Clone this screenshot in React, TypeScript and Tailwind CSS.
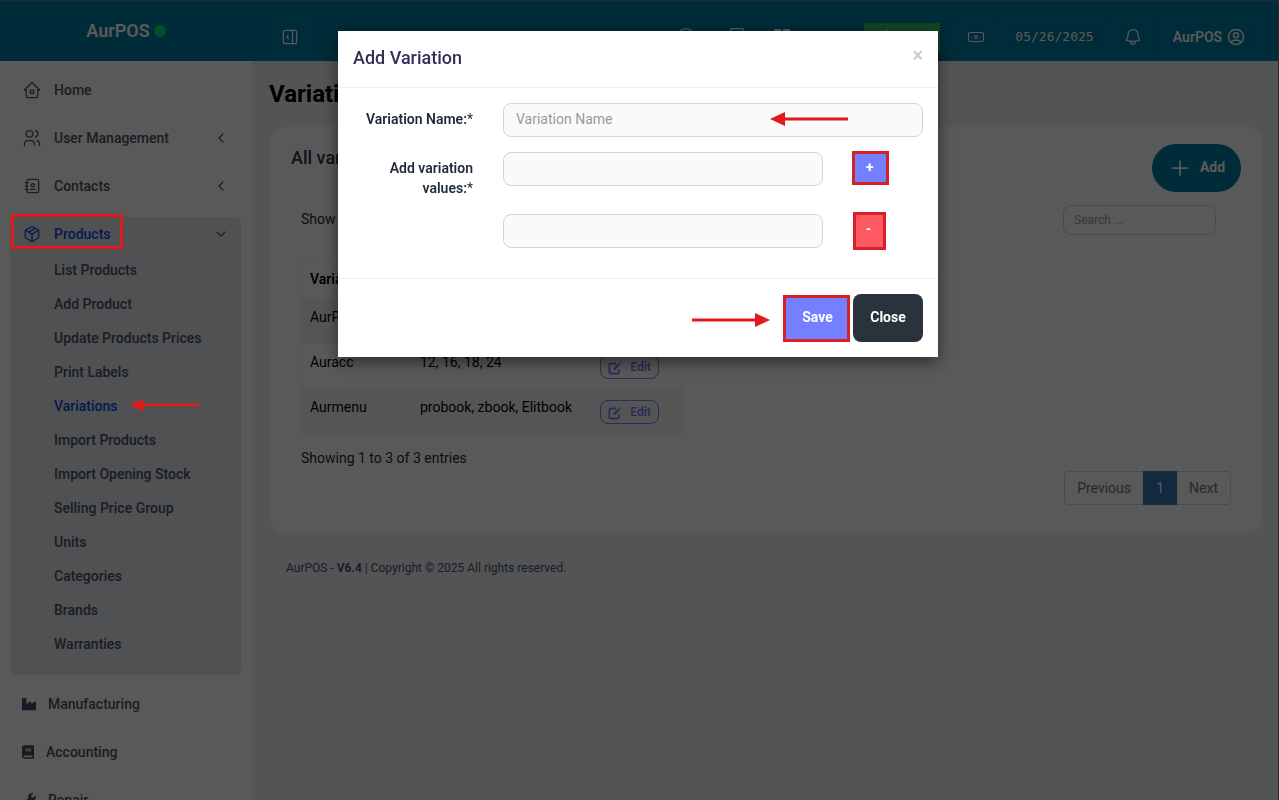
import type { ReactNode } from "react";
import {
  TbAddressBook,
  TbChevronDown,
  TbChevronLeft,
  TbHome2,
  TbLayoutSidebarRightExpand,
  TbPackage,
  TbPlus,
  TbUserCircle,
  TbUsers,
} from "react-icons/tb";
import { FaBook, FaIndustry, FaWrench } from "react-icons/fa";
import { HiOutlineBell } from "react-icons/hi2";
import { Banknote, Calculator, CirclePlus, LayoutGrid } from "lucide-react";

const productLinks = [
  "List Products",
  "Add Product",
  "Update Products Prices",
  "Print Labels",
  "Variations",
  "Import Products",
  "Import Opening Stock",
  "Selling Price Group",
  "Units",
  "Categories",
  "Brands",
  "Warranties",
];

const rows = [
  { name: "AurPOS", values: "Small, Medium, Large" },
  { name: "Auracc", values: "12, 16, 18, 24" },
  { name: "Aurmenu", values: "probook, zbook, Elitbook" },
];

function Arrow({ direction, className }: { direction: "left" | "right"; className: string }) {
  return (
    <svg viewBox="0 0 78 16" aria-hidden="true" className={className}>
      {direction === "left" ? (
        <path d="M0 8L15 1V6.5H78V9.5H15V15Z" fill="#e01b1e" />
      ) : (
        <path d="M78 8L63 1V6.5H0V9.5H63V15Z" fill="#e01b1e" />
      )}
    </svg>
  );
}

function EditIcon() {
  return (
    <svg viewBox="0 0 14 14" fill="none" stroke="currentColor" aria-hidden="true" className="mt-0.5 size-3.5">
      <path d="M8 2.5H3.2A1.8 1.8 0 0 0 1.4 4.3V10.8A1.8 1.8 0 0 0 3.2 12.6H9.2A1.8 1.8 0 0 0 11 10.8V8.5" strokeWidth="1.8" />
      <path d="M5.2 9.2L5.8 6.8L10.3 2.3L12 4L7.5 8.5Z" fill="currentColor" stroke="none" />
      <path d="M11 1.7L11.8 0.9L13.4 2.5L12.6 3.3Z" fill="currentColor" stroke="none" />
    </svg>
  );
}

function MenuItem({ icon, label, expandable }: { icon: ReactNode; label: string; expandable?: boolean }) {
  return (
    <a href="#" className="flex h-12 shrink-0 items-center gap-3 pr-6 pl-[22px]">
      {icon}
      <span className="grow">{label}</span>
      {expandable && <TbChevronLeft className="size-4" strokeWidth={1.75} />}
    </a>
  );
}

function Sidebar() {
  return (
    <aside className="flex w-[254px] shrink-0 flex-col overflow-hidden border-r border-gray-200 bg-white pt-[5px] text-sm font-medium text-gray-600">
      <MenuItem icon={<TbHome2 className="size-5" strokeWidth={1.5} />} label="Home" />
      <MenuItem icon={<TbUsers className="size-5" strokeWidth={1.5} />} label="User Management" expandable />
      <MenuItem icon={<TbAddressBook className="size-5" strokeWidth={1.5} />} label="Contacts" expandable />
      <div className="mt-[7px] mr-3 ml-2.5 shrink-0 rounded-md bg-gray-200 pb-3.5">
        <a href="#" className="relative flex h-9 items-center gap-3 px-3 pb-0.5 text-blue-700">
          <TbPackage className="size-5" strokeWidth={1.5} />
          <span className="grow">Products</span>
          <TbChevronDown className="size-4 text-gray-600" strokeWidth={1.75} />
          <span className="absolute -top-[3px] left-px z-30 h-[35px] w-28 border-3 border-[#e01b1e]" />
        </a>
        {productLinks.map((label) => (
          <a
            key={label}
            href="#"
            className={`relative flex h-[34px] items-center pl-11 ${label === "Variations" ? "text-blue-700" : ""}`}
          >
            {label}
            {label === "Variations" && (
              <Arrow direction="left" className="absolute top-2 left-30 z-30 h-4 w-[70px]" />
            )}
          </a>
        ))}
      </div>
      <div className="mt-[5px] shrink-0">
        <a href="#" className="flex h-12 items-center gap-3 pl-[22px]">
          <FaIndustry className="size-3.5 text-[#434968]" />
          Manufacturing
        </a>
        <a href="#" className="flex h-12 items-center gap-3 pl-[22px]">
          <FaBook className="h-3.5 w-3 text-[#434968]" />
          Accounting
        </a>
        <a href="#" className="flex h-12 items-center gap-3 pl-[22px]">
          <FaWrench className="size-3.5 text-[#434968]" />
          Repair
        </a>
      </div>
    </aside>
  );
}

const headerButton =
  "flex h-[34px] items-center justify-center rounded-lg border border-white/5 text-white";

function Header() {
  return (
    <header className="flex h-[61px] shrink-0 border-t border-slate-500 bg-[#007ba0] text-white">
      <div className="flex w-[254px] shrink-0 items-center justify-center gap-1 pr-0.5 text-lg font-semibold">
        AurPOS
        <span className="size-3 rounded-full bg-green-400" />
      </div>
      <div className="flex grow items-start gap-2.5 px-[19px] pt-[19px]">
        <button type="button" aria-label="Toggle sidebar" className={`${headerButton} w-[34px]`}>
          <TbLayoutSidebarRightExpand className="size-5" strokeWidth={1.5} />
        </button>
        <button type="button" aria-label="New" className={`${headerButton} ml-auto w-12`}>
          <CirclePlus className="size-5" strokeWidth={1.5} />
        </button>
        <button type="button" aria-label="Calculator" className={`${headerButton} w-[34px]`}>
          <Calculator className="size-5" strokeWidth={1.5} />
        </button>
        <button type="button" className={`${headerButton} w-20 gap-1 pr-3 text-sm font-semibold`}>
          <LayoutGrid className="size-5" strokeWidth={1.5} fill="currentColor" />
          POS
        </button>
        <button
          type="button"
          aria-label="Repair"
          className="mr-[9px] ml-2.5 mt-[3px] flex h-[30px] w-[76px] items-center bg-[#2fc45f] pl-3 text-white"
        >
          <FaWrench className="size-4" />
        </button>
        <button type="button" aria-label="Profit" className={`${headerButton} w-[34px]`}>
          <Banknote className="size-[18px]" strokeWidth={1.5} />
        </button>
        <time className={`${headerButton} w-[103px] font-['DejaVu_Sans_Mono',monospace] text-[13px]`}>05/26/2025</time>
        <button type="button" aria-label="Notifications" className={`${headerButton} w-[34px]`}>
          <HiOutlineBell className="size-5" />
        </button>
        <button type="button" className={`${headerButton} w-[99px] gap-1 text-sm font-semibold`}>
          AurPOS
          <TbUserCircle className="size-5" strokeWidth={1.75} />
        </button>
      </div>
    </header>
  );
}

function VariationTable() {
  return (
    <table className="w-[382px] table-fixed border-collapse text-left text-black">
      <thead>
        <tr className="h-[38px]">
          <th className="w-[110px] border border-gray-100 px-2 pb-0.5 font-semibold">Variations</th>
          <th className="w-[178px] border border-gray-100 px-2 pb-0.5 font-semibold">Values</th>
          <th className="border border-gray-100 px-2 pb-0.5 font-semibold">Action</th>
        </tr>
      </thead>
      <tbody>
        {rows.map((row) => (
          <tr key={row.name} className="h-[45px] odd:bg-[#f4f4f4]">
            <td className="border border-gray-100 px-2 pt-2 align-top">{row.name}</td>
            <td className="border border-gray-100 px-2 pt-2 align-top whitespace-nowrap">{row.values}</td>
            <td className="border border-gray-100 px-2.5 pt-0.5">
              <button
                type="button"
                className="flex h-6 w-[59px] items-center justify-center gap-2 rounded-lg border border-[#7480ff] text-xs font-semibold text-[#7480ff]"
              >
                <EditIcon />
                Edit
              </button>
            </td>
          </tr>
        ))}
      </tbody>
    </table>
  );
}

function Content() {
  return (
    <main className="flex grow flex-col bg-[#eef0f5] px-[15px] text-sm">
      <h1 className="pt-[17px] text-2xl font-bold text-black">Variations</h1>
      <section className="mt-4 flex flex-col rounded-2xl border border-gray-100 bg-white px-[21px] pt-[17px] pb-7">
        <div className="flex items-start justify-between">
          <h2 className="text-lg font-medium text-[#32305a]">All variations</h2>
          <button
            type="button"
            className="flex h-12 w-[89px] items-center justify-center gap-2 rounded-full bg-[#007ba0] pb-0.5 font-bold text-white"
          >
            <TbPlus className="mt-0.5 size-6" strokeWidth={1.75} />
            Add
          </button>
        </div>
        <div className="mt-[13px] flex items-center justify-between pr-[25px] pl-2.5 text-gray-800">
          <label className="flex items-center gap-1 pb-0.5">
            Show
            <select className="h-7 rounded-lg border border-gray-300 px-2">
              <option>25</option>
            </select>
            entries
          </label>
          <input
            type="search"
            aria-label="Search"
            placeholder="Search ..."
            className="h-[30px] w-[153px] rounded-lg border border-gray-300 bg-white px-2.5 text-xs placeholder:text-gray-400"
          />
        </div>
        <div className="mt-[25px] pl-2.5">
          <VariationTable />
        </div>
        <p className="mt-3.5 pl-2.5 text-gray-800">Showing 1 to 3 of 3 entries</p>
        <nav aria-label="Pages" className="mt-[3px] mr-2.5 flex h-[34px] self-end rounded-sm border border-gray-300 text-gray-500">
          <a href="#" className="flex items-center px-3">Previous</a>
          <a href="#" className="-my-px flex w-[34px] items-center justify-center bg-[#337ab7] text-white">1</a>
          <a href="#" className="flex items-center px-3">Next</a>
        </nav>
      </section>
      <footer className="mt-[26px] pl-[17px] text-xs text-gray-600">
        AurPOS - <b>V6.4</b> | Copyright © 2025 All rights reserved.
      </footer>
    </main>
  );
}

const field =
  "h-[34px] w-full rounded-lg border border-gray-300 bg-[#fafafa] px-3 pb-0.5 text-sm text-gray-700 placeholder:text-[#999]";

function AddVariationDialog() {
  return (
    <div className="fixed inset-0 z-20 flex items-start justify-center bg-black/65 pt-[31px] pr-[3px]">
      <form
        role="dialog"
        aria-labelledby="dialog-title"
        className="w-[600px] bg-white text-sm text-gray-800 shadow-[0_5px_15px_rgba(0,0,0,0.5)]"
      >
        <div className="flex h-[57px] items-start justify-between border-b border-gray-200/70 px-[15px] pt-3">
          <h2 id="dialog-title" className="mt-px text-lg font-medium text-[#32305a]">Add Variation</h2>
          <button type="button" aria-label="Dismiss" className="text-xl leading-6 font-bold text-[#ccc]">×</button>
        </div>
        <div className="grid grid-cols-[120px_320px_1fr] gap-x-[30px] px-[15px] pt-[15px] pb-7">
          <label htmlFor="variation-name" className="pt-1.5 text-right font-semibold">
            Variation Name:<span className="font-normal">*</span>
          </label>
          <div className="relative col-span-2">
            <input id="variation-name" placeholder="Variation Name" className={field} />
            <Arrow direction="left" className="absolute top-2 right-[75px] h-4 w-[78px]" />
          </div>
          <label htmlFor="variation-value" className="mt-[15px] pt-1.5 text-right font-semibold">
            Add variation values:<span className="font-normal">*</span>
          </label>
          <input id="variation-value" className={`${field} mt-[15px]`} />
          <div className="mt-3.5 -ml-px">
            <button
              type="button"
              className="flex h-[34px] w-[37px] items-center justify-center border-3 border-[#d6202a] bg-[#7480ff] pr-0.5 pb-0.5 font-bold text-white"
            >
              +
            </button>
          </div>
          <input aria-label="Variation value 2" className={`${field} col-start-2 mt-4`} />
          <div className="mt-3.5">
            <button
              type="button"
              className="flex h-[38px] w-[33px] items-center justify-center border-3 border-[#d6202a] bg-[#ff5861] pr-0.5 pb-1 font-bold text-white"
            >
              -
            </button>
          </div>
        </div>
        <div className="flex items-center justify-end gap-[3px] border-t border-gray-200/70 p-[15px]">
          <Arrow direction="right" className="mt-1 mr-2.5 h-4 w-[78px]" />
          <button
            type="submit"
            className="h-[47px] w-[67px] border-3 border-[#d6202a] bg-[#7480ff] pb-0.5 pl-0.5 font-bold text-white"
          >
            Save
          </button>
          <button type="button" className="h-12 w-[70px] rounded-lg bg-[#2a323c] pb-0.5 font-bold text-white">Close</button>
        </div>
      </form>
    </div>
  );
}

export default function App() {
  return (
    <div className="flex h-screen flex-col overflow-hidden border-r border-gray-500 font-[Roboto,sans-serif]">
      <Header />
      <div className="flex min-h-0 grow">
        <Sidebar />
        <Content />
      </div>
      <AddVariationDialog />
    </div>
  );
}
